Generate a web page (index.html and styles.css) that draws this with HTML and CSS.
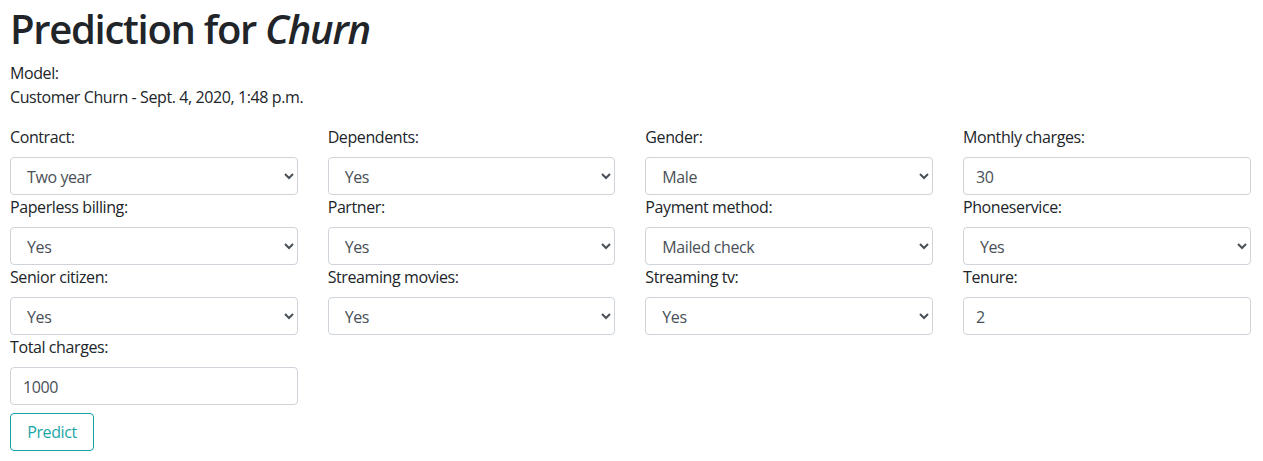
FILE: index.html
```html
<!DOCTYPE html>
<html lang="en">
<head>
<meta charset="utf-8">
<title>Prediction for Churn</title>
<link rel="stylesheet" href="styles.css">
</head>
<body>
<div class="page">
  <h1 class="title">Prediction for <em>Churn</em></h1>
  <p class="model">Model:<br>Customer Churn - Sept. 4, 2020, 1:48 p.m.</p>
  <form class="form">
    <div class="grid">
      <div class="field">
        <label>Contract:</label>
        <select class="control"><option>Two year</option></select>
      </div>
      <div class="field">
        <label>Dependents:</label>
        <select class="control"><option>Yes</option></select>
      </div>
      <div class="field">
        <label>Gender:</label>
        <select class="control"><option>Male</option></select>
      </div>
      <div class="field">
        <label>Monthly charges:</label>
        <input class="control" type="text" value="30">
      </div>
      <div class="field">
        <label>Paperless billing:</label>
        <select class="control"><option>Yes</option></select>
      </div>
      <div class="field">
        <label>Partner:</label>
        <select class="control"><option>Yes</option></select>
      </div>
      <div class="field">
        <label>Payment method:</label>
        <select class="control"><option>Mailed check</option></select>
      </div>
      <div class="field">
        <label>Phoneservice:</label>
        <select class="control"><option>Yes</option></select>
      </div>
      <div class="field">
        <label>Senior citizen:</label>
        <select class="control"><option>Yes</option></select>
      </div>
      <div class="field">
        <label>Streaming movies:</label>
        <select class="control"><option>Yes</option></select>
      </div>
      <div class="field">
        <label>Streaming tv:</label>
        <select class="control"><option>Yes</option></select>
      </div>
      <div class="field">
        <label>Tenure:</label>
        <input class="control" type="text" value="2">
      </div>
      <div class="field">
        <label>Total charges:</label>
        <input class="control" type="text" value="1000">
      </div>
    </div>
    <button type="button" class="btn">Predict</button>
  </form>
</div>
</body>
</html>
```
FILE: styles.css
```css
html, body {
  margin: 0;
  padding: 0;
  background: #fff;
}
body {
  font-family: "Open Sans", "Noto Sans", sans-serif;
  font-size: 16px;
  line-height: 1.5;
  letter-spacing: -0.4px;
  color: #212529;
}
.page {
  padding: 1px 12px 0 10px;
}
.title {
  margin: 4px 0 8px;
  font-size: 40px;
  line-height: 48px;
  font-weight: 600;
  letter-spacing: -1.3px;
}
.title em {
  font-style: italic;
}
.model {
  margin: 0 0 16px;
}
.grid {
  display: grid;
  grid-template-columns: repeat(4, 287.67px);
  column-gap: 30px;
}
.field {
  display: flex;
  flex-direction: column;
}
.field label {
  margin-bottom: 8px;
}
.control {
  box-sizing: border-box;
  height: 38px;
  width: 100%;
  padding: 7px 12px 5px;
  font-family: inherit;
  font-size: 16px;
  line-height: 1.5;
  letter-spacing: -0.4px;
  color: #495057;
  background: #fff;
  border: 1px solid #ced4da;
  border-radius: 4px;
  margin: 0;
}
.btn {
  margin-top: 8px;
  width: 84px;
  height: 38px;
  padding: 6px 0;
  font-family: inherit;
  font-size: 16px;
  line-height: 1.5;
  letter-spacing: -0.4px;
  color: #1ba5a8;
  background: transparent;
  border: 1px solid #13a0a3;
  border-radius: 4px;
  cursor: pointer;
}
```
